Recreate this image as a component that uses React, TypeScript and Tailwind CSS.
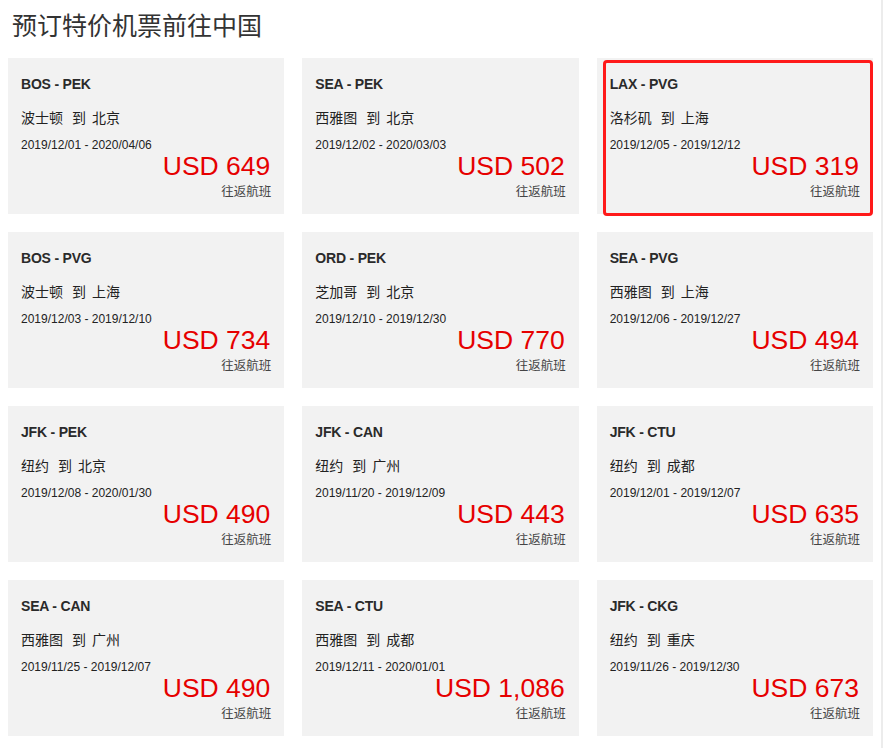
import React from "react";

type Deal = { route: string; from: string; to: string; dates: string; price: string; hl?: boolean };

const deals: Deal[] = [
  { route: "BOS - PEK", from: "波士顿", to: "北京", dates: "2019/12/01 - 2020/04/06", price: "USD 649" },
  { route: "SEA - PEK", from: "西雅图", to: "北京", dates: "2019/12/02 - 2020/03/03", price: "USD 502" },
  { route: "LAX - PVG", from: "洛杉矶", to: "上海", dates: "2019/12/05 - 2019/12/12", price: "USD 319", hl: true },
  { route: "BOS - PVG", from: "波士顿", to: "上海", dates: "2019/12/03 - 2019/12/10", price: "USD 734" },
  { route: "ORD - PEK", from: "芝加哥", to: "北京", dates: "2019/12/10 - 2019/12/30", price: "USD 770" },
  { route: "SEA - PVG", from: "西雅图", to: "上海", dates: "2019/12/06 - 2019/12/27", price: "USD 494" },
  { route: "JFK - PEK", from: "纽约", to: "北京", dates: "2019/12/08 - 2020/01/30", price: "USD 490" },
  { route: "JFK - CAN", from: "纽约", to: "广州", dates: "2019/11/20 - 2019/12/09", price: "USD 443" },
  { route: "JFK - CTU", from: "纽约", to: "成都", dates: "2019/12/01 - 2019/12/07", price: "USD 635" },
  { route: "SEA - CAN", from: "西雅图", to: "广州", dates: "2019/11/25 - 2019/12/07", price: "USD 490" },
  { route: "SEA - CTU", from: "西雅图", to: "成都", dates: "2019/12/11 - 2020/01/01", price: "USD 1,086" },
  { route: "JFK - CKG", from: "纽约", to: "重庆", dates: "2019/11/26 - 2019/12/30", price: "USD 673" },
];

const sans = "font-['Liberation_Sans','Noto_Sans_CJK_SC',sans-serif]";

function Card({ d }: { d: Deal }) {
  return (
    <div className="relative h-[156px] bg-[#f2f2f2] px-[13px] pt-[16px] flex flex-col">
      <div className="text-[14px] leading-[20px] font-bold text-[#2a2a2a] tracking-[-0.2px]">{d.route}</div>
      <div className="mt-[14px] text-[14px] leading-[20px] text-[#222] flex">
        <span>{d.from}</span>
        <span className="ml-[9px]">到</span>
        <span className="ml-[6px]">{d.to}</span>
      </div>
      <div className="mt-[10px] text-[12px] leading-[14px] text-[#222]">{d.dates}</div>
      <div className="text-right text-[26.5px] leading-[28px] text-[#e60000] pr-[1px]">{d.price}</div>
      <div className="mt-[4px] text-right text-[12.5px] leading-[16px] text-[#444]">往返航班</div>
      {d.hl && (
        <div className="absolute left-[6px] top-[2px] right-0 bottom-[-2px] border-[3px] border-[#ff1a1a] rounded-[4px]" />
      )}
    </div>
  );
}

export default function App() {
  return (
    <div className={`w-[884px] h-[748px] bg-white ${sans}`}>
      <div className="w-[883px] h-full border-r-2 border-[#ececec] pl-[8px]">
        <h1 className="pt-[8px] pl-[4px] text-[25px] leading-[36px] text-[#333] font-normal mb-[14px]">
          预订特价机票前往中国
        </h1>
        <div className="w-[865px] grid grid-cols-3 gap-[18px]">
          {deals.map((d) => (
            <Card key={d.route + d.price} d={d} />
          ))}
        </div>
      </div>
    </div>
  );
}
